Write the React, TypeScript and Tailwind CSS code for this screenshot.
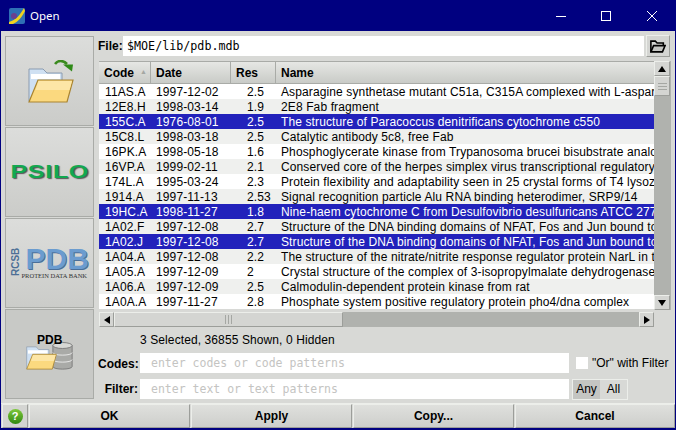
type Row = { code: string; date: string; res: string; name: string; selected?: boolean };

const ROWS: Row[] = [
  { code: "11AS.A", date: "1997-12-02", res: "2.5", name: "Asparagine synthetase mutant C51a, C315A complexed with L-aspartate" },
  { code: "12E8.H", date: "1998-03-14", res: "1.9", name: "2E8 Fab fragment" },
  { code: "155C.A", date: "1976-08-01", res: "2.5", name: "The structure of Paracoccus denitrificans cytochrome c550", selected: true },
  { code: "15C8.L", date: "1998-03-18", res: "2.5", name: "Catalytic antibody 5c8, free Fab" },
  { code: "16PK.A", date: "1998-05-18", res: "1.6", name: "Phosphoglycerate kinase from Trypanosoma brucei bisubstrate analogue" },
  { code: "16VP.A", date: "1999-02-11", res: "2.1", name: "Conserved core of the herpes simplex virus transcriptional regulatory protein" },
  { code: "174L.A", date: "1995-03-24", res: "2.3", name: "Protein flexibility and adaptability seen in 25 crystal forms of T4 lysozyme" },
  { code: "1914.A", date: "1997-11-13", res: "2.53", name: "Signal recognition particle Alu RNA binding heterodimer, SRP9/14" },
  { code: "19HC.A", date: "1998-11-27", res: "1.8", name: "Nine-haem cytochrome C from Desulfovibrio desulfuricans ATCC 27774", selected: true },
  { code: "1A02.F", date: "1997-12-08", res: "2.7", name: "Structure of the DNA binding domains of NFAT, Fos and Jun bound to DNA" },
  { code: "1A02.J", date: "1997-12-08", res: "2.7", name: "Structure of the DNA binding domains of NFAT, Fos and Jun bound to DNA", selected: true },
  { code: "1A04.A", date: "1997-12-08", res: "2.2", name: "The structure of the nitrate/nitrite response regulator protein NarL in the" },
  { code: "1A05.A", date: "1997-12-09", res: "2", name: "Crystal structure of the complex of 3-isopropylmalate dehydrogenase" },
  { code: "1A06.A", date: "1997-12-09", res: "2.5", name: "Calmodulin-dependent protein kinase from rat" },
  { code: "1A0A.A", date: "1997-11-27", res: "2.8", name: "Phosphate system positive regulatory protein pho4/dna complex" },
];

const raised = "border border-t-[#eceeea] border-l-[#eceeea] border-r-[#9c9e9a] border-b-[#9c9e9a]";

function FolderIcon({ className }: { className?: string }) {
  return (
    <svg viewBox="0 0 46 35" className={className}>
      <path d="M1 1h14l4 4h15v28H1z" fill="#cfe0f2" stroke="#8a9bb0" />
      <path d="M3 6h29v5H3z" fill="#fff" />
      <path d="M10 12h35l-6 22H1z" fill="#fbd97f" stroke="#a98430" strokeWidth="1.2" />
      <path d="M10.5 13h33.500l-2.500 9H7.500z" fill="#fde6a6" />
    </svg>
  );
}

function RailTab({ children, active }: { children: React.ReactNode; active?: boolean }) {
  return (
    <div
      className={`flex h-[90px] items-center justify-center border border-[#a9aba7] ${
        active ? "bg-[#c8c9c6]" : "bg-gradient-to-b from-[#dcdddb] to-[#cbccc9]"
      }`}
    >
      {children}
    </div>
  );
}

function Rail() {
  return (
    <div className="flex w-[89px] shrink-0 flex-col gap-px">
      <RailTab>
        <div className="relative ml-[1px] h-[43px] w-[45px]">
          <FolderIcon className="absolute bottom-0 left-0 h-[35px] w-[46px]" />
          <svg viewBox="0 0 19 12" className="absolute top-0 right-0 h-[12px] w-[19px]">
            <path d="M1 4 C4 0 9 0 13 4" fill="none" stroke="#3a8a1e" strokeWidth="2.6" />
            <path d="M9 4.500h10l-1 7z" fill="#2f8a18" />
          </svg>
        </div>
      </RailTab>
      <RailTab>
        <span className="scale-x-[1.32] text-[19px] font-bold tracking-[0.5px] text-[#12a850] [text-shadow:1px_1px_1px_#555]">
          PSILO
        </span>
      </RailTab>
      <RailTab>
        <div className="mt-[2px] flex h-[34px] w-[80px] items-stretch">
          <span className="h-[29px] w-[11px] rotate-180 text-center text-[10px] leading-[11px] font-bold text-[#4d6f96] [writing-mode:vertical-rl]">
            RCSB
          </span>
          <div className="flex flex-col">
            <span className="ml-[5px] h-[24px] text-[30px] leading-[24px] font-bold text-[#6b9ccf] [text-shadow:1px_1px_0_#4a6f99]">
              PDB
            </span>
            <span className="mt-[1px] ml-[1px] font-['Liberation_Serif',serif] text-[6.500px] leading-[8px] whitespace-nowrap text-[#333]">
              PROTEIN DATA BANK
            </span>
          </div>
        </div>
      </RailTab>
      <RailTab active>
        <div className="relative mt-[-3px] h-[37px] w-[47px]">
          <svg viewBox="0 0 24 32" className="absolute right-0 bottom-0 h-[30px] w-[21px]">
            <path d="M1 4v24c0 4 22 4 22 0V4z" fill="#a9aaa7" stroke="#777" />
            <ellipse cx="12" cy="4" rx="11" ry="3.400" fill="#d7d8d5" stroke="#777" />
            <path d="M1 12c0 4 22 4 22 0M1 20c0 4 22 4 22 0" fill="none" stroke="#eee" />
          </svg>
          <FolderIcon className="absolute bottom-[1px] left-0 h-[24px] w-[31px]" />
          <span className="absolute top-[-3px] left-[11px] text-[12px] font-bold text-black">PDB</span>
        </div>
      </RailTab>
    </div>
  );
}

function ScrollButton({ points, wide }: { points: string; wide?: boolean }) {
  return (
    <div className={`flex h-[15px] shrink-0 items-center justify-center bg-[#d4d5d2] ${wide ? "w-[16px]" : "w-[15px]"} ${raised}`}>
      <svg viewBox="0 0 8 8" className="h-[8px] w-[8px]">
        <polygon points={points} fill="#000" />
      </svg>
    </div>
  );
}

function Grip({ vertical }: { vertical?: boolean }) {
  return (
    <div className={`flex gap-[2px] ${vertical ? "w-[9px] flex-col" : "h-[9px]"}`}>
      {[0, 1, 2].map((i) => (
        <div key={i} className={vertical ? "h-px bg-[#a5a7a3]" : "w-px bg-[#a5a7a3]"} />
      ))}
    </div>
  );
}

function HeaderCell({ width, children }: { width: string; children: React.ReactNode }) {
  return (
    <div className={`flex h-full items-center pl-[5px] text-[12px] font-bold text-black ${width} border-r border-[#a9aba7]`}>
      {children}
    </div>
  );
}

function ResultTable() {
  return (
    <div className="ml-px flex">
      <div className="w-[555px]">
        <div className="flex h-[23px] border-y border-[#a9aba7] bg-gradient-to-b from-[#e6e7e4] to-[#c9cbc7]">
          <HeaderCell width="w-[52px]">
            Code
            <span className="ml-[6px] text-[7px] text-[#a5a7a3]">▲</span>
          </HeaderCell>
          <HeaderCell width="w-[80px]">Date</HeaderCell>
          <HeaderCell width="w-[45px]">Res</HeaderCell>
          <div className="flex flex-1 items-center pl-[5px] text-[12px] font-bold text-black">Name</div>
        </div>
        {ROWS.map((row, i) => (
          <div
            key={row.code}
            className={`flex h-[15px] pt-px text-[12px] leading-[15px] tracking-[0.12px] whitespace-nowrap ${
              row.selected ? "bg-[#2222bb] text-white" : i % 2 === 0 ? "bg-white text-black" : "bg-[#eff0ee] text-black"
            }`}
          >
            <span className="w-[52px] shrink-0 pl-[6px]">{row.code}</span>
            <span className="w-[80px] shrink-0 pl-[5px]">{row.date}</span>
            <span className="w-[45px] shrink-0 pl-[16px]">{row.res}</span>
            <span className="w-[378px] shrink-0 overflow-hidden pl-[5px]">{row.name}</span>
          </div>
        ))}
      </div>
      <div className="flex h-[249px] w-[17px] flex-col bg-[#b0b2ae]">
        <ScrollButton points="4,1 8,7 0,7" wide />
        <div className={`flex h-[20px] w-[16px] items-center justify-center bg-[#d4d5d2] ${raised}`}>
          <Grip vertical />
        </div>
        <div className="flex-1" />
        <ScrollButton points="0,1 8,1 4,7" wide />
      </div>
    </div>
  );
}

function HorizontalScroll() {
  return (
    <div className="mt-[2px] ml-px flex h-[15px] w-[555px] bg-[#b0b2ae]">
      <ScrollButton points="1,4 7,0 7,8" />
      <div className={`flex w-[229px] items-center justify-center bg-[#d4d5d2] ${raised}`}>
        <Grip />
      </div>
      <div className="flex-1" />
      <ScrollButton points="1,0 7,4 1,8" />
    </div>
  );
}

function TextInput({ placeholder }: { placeholder: string }) {
  return (
    <div className="flex h-[20px] w-[429px] items-center bg-white pt-[2px] pl-[11px] font-['DejaVu_Sans_Mono',monospace] text-[11.500px] whitespace-nowrap text-[#c4c4c2]">
      {placeholder}
    </div>
  );
}

function FooterButton({ label, width }: { label: string; width: string }) {
  return (
    <div className={`flex h-[24px] items-center justify-center bg-gradient-to-b from-[#dfe0dd] to-[#cdcecb] text-[12px] font-bold text-black ${width} ${raised}`}>
      {label}
    </div>
  );
}

export default function App() {
  return (
    <div className="flex h-[430px] w-[676px] flex-col overflow-hidden bg-[#000080] font-['Liberation_Sans',sans-serif] text-[12px]">
      {/* Title bar */}
      <div className="flex h-[31px] shrink-0 items-center pl-[9px] text-white">
        <svg viewBox="0 0 16 16" className="h-[16px] w-[16px]">
          <rect width="16" height="16" rx="2" fill="#2f6fb5" />
          <path d="M0 14 C7 12 11 7 15 0 L16 3 C13 9 9 14 4 16 H0z" fill="#f2d21e" />
          <circle cx="5" cy="8" r="3" fill="#6b3f8f" />
        </svg>
        <span className="ml-[5px] font-['Noto_Sans',sans-serif] text-[11.500px]">Open</span>
        <div className="ml-auto flex items-center pr-[19px]">
          <svg viewBox="0 0 10 10" className="h-[10px] w-[10px]" shapeRendering="crispEdges">
            <path d="M0 5.500h10" stroke="#fff" />
          </svg>
          <svg viewBox="0 0 10 10" className="ml-[35px] h-[10px] w-[10px]" shapeRendering="crispEdges">
            <rect x="0.500" y="0.500" width="9" height="9" fill="none" stroke="#fff" />
          </svg>
          <svg viewBox="0 0 10 10" className="ml-[36px] h-[10px] w-[10px]">
            <path d="M0 0l10 10M10 0L0 10" stroke="#fff" />
          </svg>
        </div>
      </div>

      {/* Body */}
      <div className="mx-px mb-[2px] flex flex-1 flex-col bg-[#d8d9d6]">
        <div className="flex flex-1 pt-[5px] pl-[4px]">
          <Rail />
          <div className="ml-[4px] flex-1">
            <div className="flex h-[20px] items-center">
              <span className="w-[25px] text-[12px] font-bold text-black">File:</span>
              <div className="flex h-[20px] w-[521px] items-center bg-white pt-[2px] pl-[4px] font-['DejaVu_Sans_Mono',monospace] text-[11.700px] text-black">
                $MOE/lib/pdb.mdb
              </div>
              <div className={`ml-[2px] flex h-[22px] w-[24px] items-center justify-center bg-[#d4d5d2] ${raised}`}>
                <svg viewBox="0 0 18 14" className="h-[13px] w-[16px]">
                  <path d="M1 13V1h5l2 2h7v3" fill="none" stroke="#000" strokeWidth="1.800" />
                  <path d="M1 13l3-7h13l-3 7z" fill="#c4c5c2" stroke="#000" strokeWidth="1.800" />
                </svg>
              </div>
            </div>

            <div className="mt-[5px]">
              <ResultTable />
            </div>
            <HorizontalScroll />

            <div className="mt-[6px] h-[15px] pl-[42px] text-[12px] leading-[15px] tracking-[0.1px] text-black">
              3 Selected, 36855 Shown, 0 Hidden
            </div>

            <div className="mt-[5px] flex h-[20px] items-center">
              <span className="w-[40px] pt-px text-right text-[12px] font-bold text-black">Codes:</span>
              <div className="ml-[2px]">
                <TextInput placeholder="enter codes or code patterns" />
              </div>
              <div className="ml-[7px] h-[12px] w-[12px] bg-white" />
              <span className="ml-[4px] text-[12px] text-black">"Or" with Filter</span>
            </div>
            <div className="mt-[6px] flex h-[20px] items-center">
              <span className="w-[40px] text-right text-[12px] font-bold text-black">Filter:</span>
              <div className="ml-[2px]">
                <TextInput placeholder="enter text or text patterns" />
              </div>
              <div className="ml-[3px] flex h-[21px] border border-[#eceeea] text-[12px] text-black">
                <span className="flex w-[27px] items-center justify-center bg-[#c4c5c2]">Any</span>
                <span className="flex w-[27px] items-center justify-center bg-[#d8d9d6]">All</span>
              </div>
            </div>
          </div>
        </div>

        {/* Footer */}
        <div className="mt-[4px] flex h-[25px] items-end gap-px border-t border-[#eceeea] pl-[1px]">
          <div className={`flex h-[24px] w-[26px] items-center justify-center bg-[#d4d5d2] ${raised}`}>
            <span className="flex h-[15px] w-[15px] items-center justify-center rounded-full bg-gradient-to-b from-[#7dc83a] to-[#2f8a10] text-[11px] font-bold text-white">?</span>
          </div>
          <FooterButton label="OK" width="w-[161px]" />
          <FooterButton label="Apply" width="w-[161px]" />
          <FooterButton label="Copy..." width="w-[161px]" />
          <FooterButton label="Cancel" width="w-[160px]" />
        </div>
      </div>
    </div>
  );
}
